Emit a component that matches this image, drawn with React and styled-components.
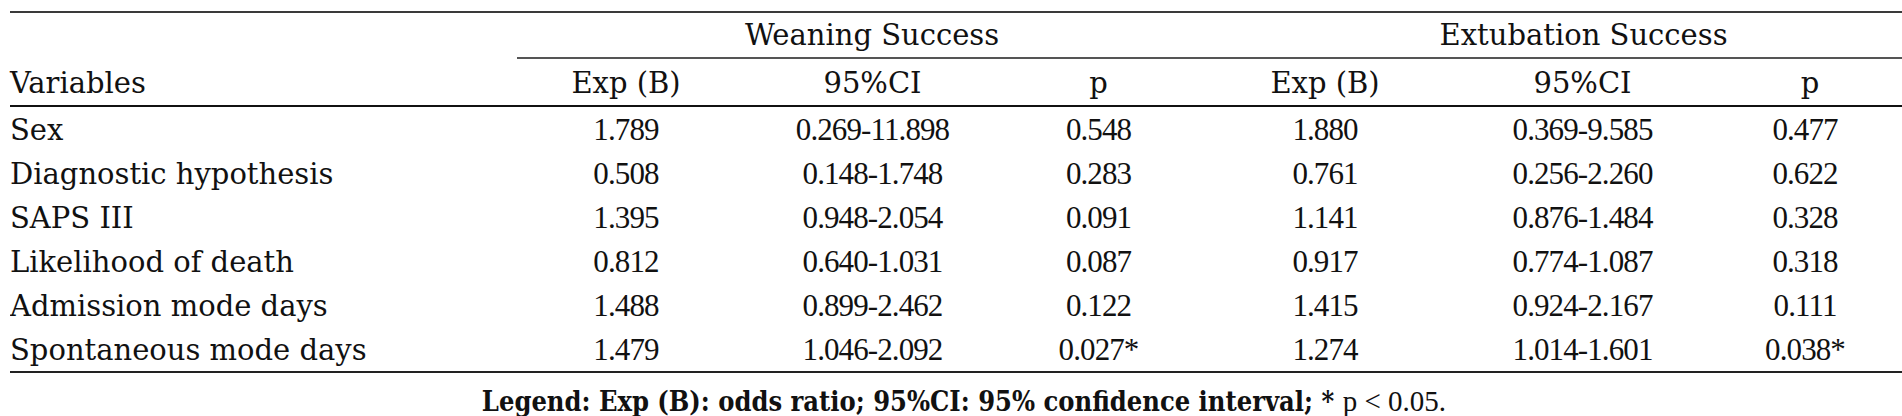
import styled, { createGlobalStyle } from 'styled-components';

const GlobalStyle = createGlobalStyle`
	html, body {
		margin: 0;
		padding: 0;
		background: #fff;
		overflow: hidden;
	}
`;

const rows = [
	['Sex', '1.789', '0.269-11.898', '0.548', '1.880', '0.369-9.585', '0.477'],
	['Diagnostic hypothesis', '0.508', '0.148-1.748', '0.283', '0.761', '0.256-2.260', '0.622'],
	['SAPS III', '1.395', '0.948-2.054', '0.091', '1.141', '0.876-1.484', '0.328'],
	['Likelihood of death', '0.812', '0.640-1.031', '0.087', '0.917', '0.774-1.087', '0.318'],
	['Admission mode days', '1.488', '0.899-2.462', '0.122', '1.415', '0.924-2.167', '0.111'],
	['Spontaneous mode days', '1.479', '1.046-2.092', '0.027*', '1.274', '1.014-1.601', '0.038*'],
];

// column edges: 10 | 517 | 735 | 1010 | 1187 | 1463 | 1702 | 1918
const widths = [507, 218, 275, 177, 276, 239, 216];

const App = () => {
	return (
		<>
			<GlobalStyle />
			<Page>
				<Table>
					<colgroup>
						{widths.map((w, i) => (
							<col key={i} style={{ width: w }} />
						))}
					</colgroup>
					<thead>
						<GroupRow>
							<GroupCell />
							<GroupCell colSpan={3} shift={40}>
								Weaning Success
							</GroupCell>
							<GroupCell colSpan={3} shift={62}>
								Extubation Success
							</GroupCell>
						</GroupRow>
						<HeadRow>
							<HeadCell left>Variables</HeadCell>
							<HeadCell>Exp (B)</HeadCell>
							<HeadCell>95%CI</HeadCell>
							<HeadCell>p</HeadCell>
							<HeadCell>Exp (B)</HeadCell>
							<HeadCell>95%CI</HeadCell>
							<HeadCell>p</HeadCell>
						</HeadRow>
					</thead>
					<tbody>
						{rows.map((r, i) => (
							<Row key={i} last={i === rows.length - 1}>
								<Label>{r[0]}</Label>
								{r.slice(1).map((c, j) => (
									<Num key={j} trim={j === 5 ? 10 : 0}>
										{c}
									</Num>
								))}
							</Row>
						))}
					</tbody>
				</Table>
				<Legend>
					<b>Legend: Exp (B): odds ratio; 95%CI: 95% confidence interval; *</b> <span>p &lt; 0.05.</span>
				</Legend>
			</Page>
		</>
	);
};

export default App;

const Page = styled.div`
	width: 1940px;
	padding: 11px 0 0 10px;
	font-family: 'DejaVu Serif', 'Liberation Serif', serif;
	font-size: 29px;
	color: #111;
`;

const Table = styled.table`
	width: 1908px;
	table-layout: fixed;
	border-collapse: collapse;
	border-top: 2px solid #3a3a3a;
`;

const GroupRow = styled.tr`
	height: 44px;
`;

const GroupCell = styled.th`
	font-weight: normal;
	text-align: center;
	padding: 0 0 0 ${props => props.shift || 0}px;
	line-height: 44px;
	white-space: nowrap;
	border-bottom: ${props => (props.colSpan ? '2px solid #555' : 'none')};
`;

const HeadRow = styled.tr`
	height: 46px;
	border-bottom: 2px solid #111;
`;

const HeadCell = styled.th`
	font-weight: normal;
	text-align: ${props => (props.left ? 'left' : 'center')};
	padding: 2px 0 0;
	line-height: 44px;
`;

const Row = styled.tr`
	height: 44px;
	border-bottom: ${props => (props.last ? '2px solid #222' : 'none')};
`;

const Label = styled.td`
	text-align: left;
	padding: 2px 0 0;
	height: 42px;
	line-height: 42px;
	white-space: nowrap;
	overflow: hidden;
`;

const Num = styled.td`
	text-align: center;
	padding: 2px ${props => props.trim}px 0 0;
	height: 42px;
	line-height: 42px;
	white-space: nowrap;
	overflow: hidden;
	font-family: 'Liberation Serif', serif;
	font-size: 31px;
	letter-spacing: -0.9px;
`;

const Legend = styled.div`
	width: 1908px;
	text-align: center;
	padding-top: 10px;
	line-height: 36px;
	font-size: 27px;
	b {
		font-weight: bold;
		font-stretch: condensed;
	}
	span {
		font-family: 'Liberation Serif', serif;
		font-size: 29px;
	}
`;
